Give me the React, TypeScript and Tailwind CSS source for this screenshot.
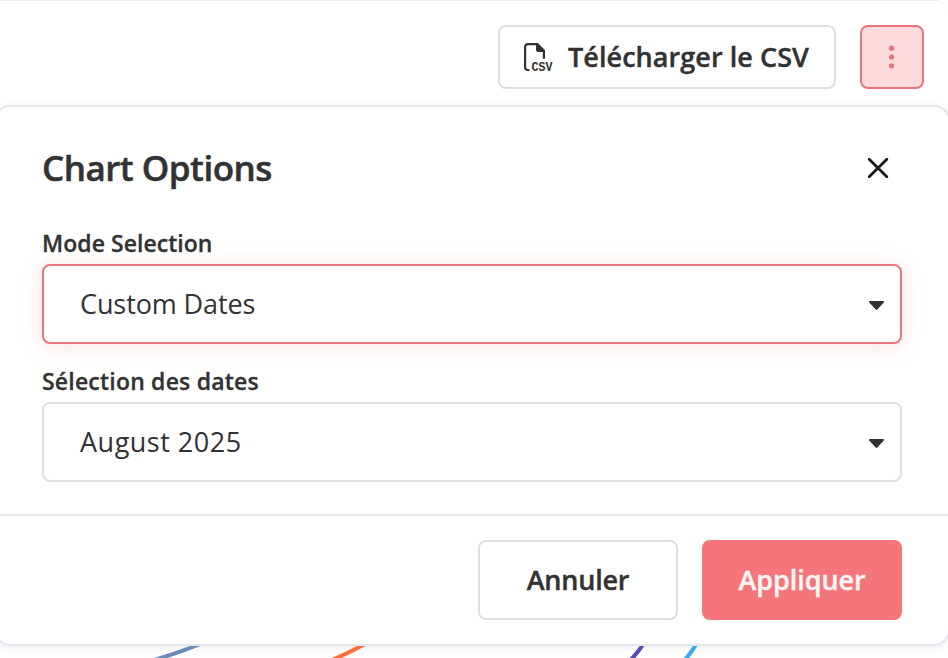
import React from 'react';

interface SelectFieldProps {
    label: string;
    value: string;
    labelClassName: string;
    valueClassName: string;
    isFocused?: boolean;
}

const SelectField: React.FC<SelectFieldProps> = ({ label, value, labelClassName, valueClassName, isFocused = false }) => (
    <div>
        <p className={`flex h-10 items-center whitespace-nowrap pb-0.5 text-[23px] font-semibold [-webkit-text-stroke:0.3px] ${labelClassName}`}>
            {label}
        </p>
        <button
            type="button"
            className={`flex h-20 w-full items-center justify-between rounded-lg border-2 bg-white pl-9 pr-4 ${
                isFocused ? 'border-[#e8757c] shadow-[0_2px_20px_rgba(245,118,123,0.22)]' : 'border-[#dfdfdf]'
            }`}
        >
            <span className={`whitespace-nowrap text-[27px] ${valueClassName}`}>{value}</span>
            <svg className="mt-0.5 h-[9px] w-[15px]" viewBox="0 0 15 9" fill="currentColor" aria-hidden="true">
                <path d="M1 0h13c.9 0 1.3 1.1.6 1.8L8.3 8.5c-.5.5-1.1.5-1.6 0L.4 1.8C-.3 1.1.1 0 1 0Z" />
            </svg>
        </button>
    </div>
);

const CsvFileIcon: React.FC = () => (
    <svg className="h-9 w-[30px] shrink-0 overflow-visible" viewBox="0 -3 30 36" aria-hidden="true">
        <path d="M6.4 28H4.8A2.7 2.7 0 0 1 2.1 25.3V4.8A2.7 2.7 0 0 1 4.8 2.1h9.6l6.5 6.5v8.1" fill="none" stroke="currentColor" strokeWidth="2.2" />
        <path d="M13 1.2h1.8l7.2 7.2v1.7h-6.1a2.9 2.9 0 0 1-2.9-2.9Z" fill="currentColor" />
        <text x="8.5" y="28.7" fontFamily="'Liberation Mono', monospace" fontSize="12" fontWeight="700" textLength="21" lengthAdjust="spacingAndGlyphs" fill="currentColor">
            CSV
        </text>
    </svg>
);

const App: React.FC = () => (
    <div className="h-[658px] w-[948px] overflow-hidden bg-white font-['Open_Sans','Noto_Sans',sans-serif] text-[#323232]">
        <header className="flex h-[105px] items-start justify-end gap-6 rounded-tr-xl border-t border-[#eeeeee] pr-6 pt-6">
            <button type="button" className="flex h-16 w-[338px] items-center gap-[15px] rounded-lg border-2 border-[#dfdfdf] pl-[23px]">
                <CsvFileIcon />
                <span className="whitespace-nowrap text-[27px] font-semibold tracking-[0.06px] [-webkit-text-stroke:0.4px]">Télécharger le CSV</span>
            </button>
            <button
                type="button"
                className="flex size-16 items-center justify-center rounded-lg border-2 border-[#e8757c] bg-[#fddadb] text-[#e8757c]"
                aria-label="Options"
            >
                <svg className="h-6 w-6" viewBox="0 0 24 24" fill="currentColor" aria-hidden="true">
                    <circle cx="11.5" cy="3.2" r="2.6" />
                    <circle cx="11.5" cy="12" r="2.6" />
                    <circle cx="11.5" cy="20.8" r="2.6" />
                </svg>
            </button>
        </header>

        <section className="-ml-[6px] h-[541px] w-[956px] rounded-2xl border-2 border-[#e2e6ed] bg-white shadow-[0_2px_8px_rgba(30,41,80,0.07)]">
            <div className="flex h-[117px] items-center justify-between pl-[46px] pr-[58px] pt-1.5">
                <h2 className="whitespace-nowrap text-[35px] font-semibold tracking-[-0.5px] [-webkit-text-stroke:0.5px]">Chart Options</h2>
                <button type="button" aria-label="Close" className="pb-0.5 text-[#161b22]">
                    <svg className="h-6 w-6" viewBox="0 0 24 24" fill="none" stroke="currentColor" aria-hidden="true">
                        <path strokeLinecap="round" strokeWidth={2.8} d="m3.2 3.2 17.6 17.6M20.8 3.2 3.2 20.8" />
                    </svg>
                </button>
            </div>

            <div className="flex h-[290px] flex-col gap-[18px] pl-[46px] pr-[46px]">
                <SelectField
                    label="Mode Selection"
                    value="Custom Dates"
                    labelClassName="tracking-[0.04px]"
                    valueClassName="tracking-[-0.1px]"
                    isFocused
                />
                <SelectField
                    label="Sélection des dates"
                    value="August 2025"
                    labelClassName="tracking-[0.2px]"
                    valueClassName="tracking-[0.5px]"
                />
            </div>

            <footer className="flex h-[130px] items-center justify-end gap-6 border-t-2 border-[#e2e6ed] pr-[46px]">
                <button type="button" className="h-20 w-[200px] rounded-lg border-2 border-[#dfdfdf] text-[27px] font-semibold tracking-[-0.2px] [-webkit-text-stroke:0.4px]">
                    Annuler
                </button>
                <button type="button" className="h-20 w-[200px] rounded-lg bg-[#f4757a] text-[27px] font-semibold tracking-[-0.05px] text-[#fff5f5] [-webkit-text-stroke:0.4px]">
                    Appliquer
                </button>
            </footer>
        </section>

        {/* Visible part of the chart lines under the panel */}
        <svg className="h-3 w-[948px]" viewBox="0 646 948 12" fill="none" strokeWidth="4" aria-hidden="true">
            <path stroke="#6b8ab8" d="M147 662Q180 653 207 641" />
            <path stroke="#fb6d3a" d="M322 664Q346 655 370 641" />
            <path stroke="#574bb5" d="M626 664Q637 655 645 641" />
            <path stroke="#38aaf0" d="M681 664Q691 654 698 641" />
        </svg>
    </div>
);

export default App;
